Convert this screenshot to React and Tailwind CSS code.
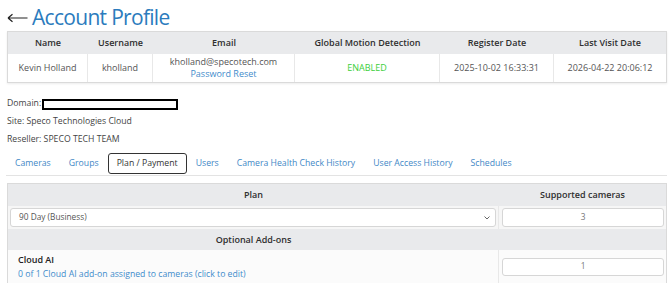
import React from "react";

const font = { fontFamily: '"Open Sans", "Noto Sans", sans-serif' };

function InfoTable() {
  const th = "h-[22px] flex items-center justify-center font-semibold text-[#2f2f2f] text-[9px] bg-[#e9eaec]";
  const td = "h-[28px] flex flex-col items-center justify-center text-[#555] text-[9px] bg-white border-r border-[#e8e8e8]";
  return (
    <div className="border border-[#dadada] shadow-[0_1px_2px_rgba(0,0,0,0.08)] grid grid-cols-[80px_65px_142px_145px_114px_1fr]">
      <div className={th}>Name</div>
      <div className={th}>Username</div>
      <div className={th}>Email</div>
      <div className={th}>Global Motion Detection</div>
      <div className={th}>Register Date</div>
      <div className={th}>Last Visit Date</div>
      <div className={td}>Kevin Holland</div>
      <div className={td}>kholland</div>
      <div className={td}>
        <div className="leading-[12px]">kholland@specotech.com</div>
        <div className="leading-[12px] text-[#3f8ccb]">Password Reset</div>
      </div>
      <div className={td}><span className="text-[#3ccf3c]">ENABLED</span></div>
      <div className={td}>2025-10-02 16:33:31</div>
      <div className={td + " border-r-0"}>2026-04-22 20:06:12</div>
    </div>
  );
}

function Tabs() {
  const tabs = [
    "Cameras",
    "Groups",
    "Plan / Payment",
    "Users",
    "Camera Health Check History",
    "User Access History",
    "Schedules",
  ];
  return (
    <div className="mt-[4px] -ml-[1px] flex items-start border-b border-[#e3e3e3] h-[23px]">
      {tabs.map((t) => {
        const active = t === "Plan / Payment";
        return (
          <div
            key={t}
            className={
              active
                ? "h-[21px] flex items-center px-[8px] border-[1.5px] border-[#333] rounded-[3px] text-[#333] text-[8.7px]"
                : "h-[21px] flex items-center px-[9px] text-[#3f88c6] text-[8.7px]"
            }
          >
            {t}
          </div>
        );
      })}
    </div>
  );
}

function Chevron() {
  return (
    <svg width="6" height="4" viewBox="0 0 6 4" className="text-[#666]">
      <path d="M0.5 0.5 L3 3 L5.5 0.5" fill="none" stroke="currentColor" strokeWidth="1" />
    </svg>
  );
}

function PlanTable() {
  return (
    <div className="mt-[7px] border border-[#dadada] border-b-[#8ab8e4] text-[8.7px]">
      <div className="grid grid-cols-[491px_1fr]">
        <div className="h-[22px] bg-[#e9eaec] flex items-center justify-center font-semibold text-[9px] text-[#2f2f2f]">Plan</div>
        <div className="h-[22px] bg-[#e9eaec] flex items-center justify-center font-semibold text-[9px] text-[#2f2f2f]">Supported cameras</div>

        <div className="h-[23px] bg-[#f6f6f6] flex items-center pl-[2px] pr-[2px] border-r border-[#e8e8e8]">
          <div className="w-full h-[19px] bg-white border border-[#d6d6d6] rounded-[3px] flex items-center justify-between pl-[8px] pr-[5px] text-[#555] text-[8.3px]">
            <span>90 Day (Business)</span>
            <Chevron />
          </div>
        </div>
        <div className="h-[23px] bg-[#f6f6f6] flex items-center pl-[3px] pr-[2px]">
          <div className="w-full h-[19px] bg-white border border-[#d6d6d6] rounded-[3px] flex items-center justify-center text-[#777] text-[8.3px]">3</div>
        </div>

        <div className="h-[21px] bg-[#e9eaec] flex items-center justify-center font-semibold text-[9px] text-[#2f2f2f]">Optional Add-ons</div>
        <div className="h-[21px] bg-[#e9eaec]"></div>

        <div className="h-[33px] bg-[#fbfbfb] flex flex-col justify-center pl-[10px] border-r border-[#e8e8e8]">
          <div className="font-semibold text-[9px] text-[#222] leading-[15px]">Cloud AI</div>
          <div className="text-[#3f8ccb] leading-[15px]">0 of 1 Cloud AI add-on assigned to cameras (click to edit)</div>
        </div>
        <div className="h-[33px] bg-[#fbfbfb] flex items-center pl-[3px] pr-[2px]">
          <div className="w-full h-[18px] bg-white border border-[#d6d6d6] rounded-[3px] flex items-center justify-center text-[#777] text-[8.3px]">1</div>
        </div>
      </div>
    </div>
  );
}

export default function App() {
  return (
    <div style={font} className="w-[670px] h-[283px] overflow-hidden bg-white pl-[7px] pr-[3px]">
      <div className="h-[31px] flex items-center pt-[3px]">
        <svg width="21" height="10" viewBox="0 0 21 10" className="text-[#222] mr-[4px] mt-[1px]">
          <path d="M1 5 H20.5 M1 5 L5.5 1.2 M1 5 L5.5 8.8" fill="none" stroke="currentColor" strokeWidth="1.2" />
        </svg>
        <span className="text-[#2b7bbd] text-[21px] tracking-[-0.7px] leading-none">Account Profile</span>
      </div>
      <InfoTable />
      <div className="mt-[12px] text-[8.7px] text-[#444] flex flex-col">
        <div className="h-[18px] flex items-center">
          <span>Domain:</span>
          <span className="ml-[1px] inline-block w-[136px] h-[11px] border-2 border-black bg-white"></span>
        </div>
        <div className="h-[18px] flex items-center">Site: Speco Technologies Cloud</div>
        <div className="h-[18px] flex items-center">Reseller: SPECO TECH TEAM</div>
      </div>
      <Tabs />
      <PlanTable />
    </div>
  );
}
